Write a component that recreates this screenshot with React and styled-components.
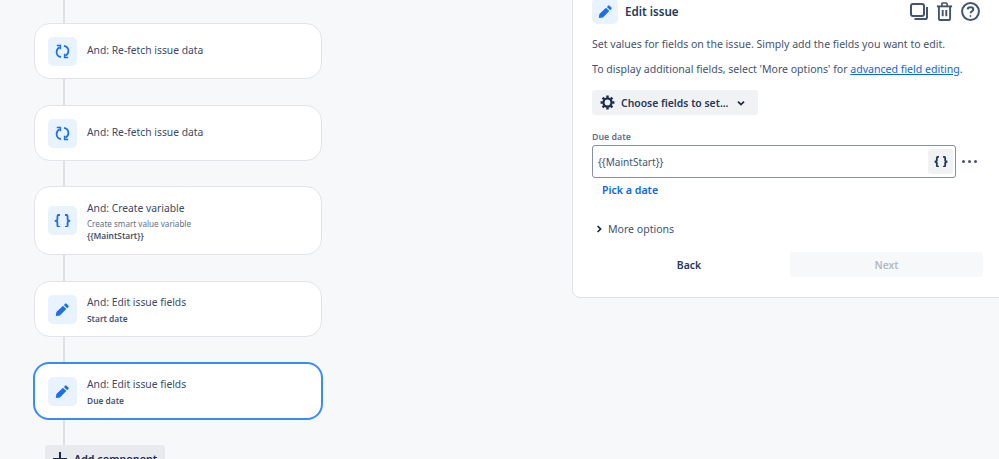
import React from "react";
import styled, { createGlobalStyle } from "styled-components";

const FONT = `"Noto Sans", "Open Sans", "Liberation Sans", sans-serif`;

const Global = createGlobalStyle`
  html, body { margin: 0; padding: 0; height: 459px; overflow: hidden; background: #f7f8f9; }
  body { font-family: ${FONT}; color: #172b4d; }
  #root { height: 459px; overflow: hidden; }
`;

const Page = styled.div`
  display: flex;
  align-items: flex-start;
  height: 459px;
  overflow: hidden;
  background: #f7f8f9;
`;

const Flow = styled.div`
  flex: 0 0 572px;
  display: flex;
  flex-direction: column;
  align-items: flex-start;
  padding-left: 34px;
  box-sizing: border-box;
`;

const Connector = styled.div`
  width: 2px;
  height: ${(p) => p.$h}px;
  margin-left: 29px;
  background: #dfe1e6;
`;

const Card = styled.div`
  box-sizing: border-box;
  width: ${(p) => (p.$selected ? 290 : 288)}px;
  height: ${(p) => p.$h}px;
  margin-left: ${(p) => (p.$selected ? -1 : 0)}px;
  display: flex;
  align-items: center;
  gap: 10px;
  padding-left: 13px;
  background: #fff;
  border: ${(p) => (p.$selected ? "2px solid #388bff" : "1px solid #e2e4e9")};
  border-radius: 16px;
`;

const Tile = styled.div`
  flex: none;
  width: ${(p) => p.$size}px;
  height: ${(p) => p.$size}px;
  display: flex;
  align-items: center;
  justify-content: center;
  border-radius: 5px;
  background: #e9f2ff;
  color: #1d6fe8;
`;

const CardText = styled.div`
  display: flex;
  flex-direction: column;
  min-width: 0;
  margin-top: ${(p) => (p.$single ? -2 : 2)}px;
`;

const CardTitle = styled.div`
  font-size: 10.3px;
  line-height: 14px;
  color: #3b4a66;
`;

const CardSub = styled.div`
  font-size: 8.1px;
  line-height: 12px;
  margin-top: 3px;
  color: #626f86;
`;

const CardStrong = styled.div`
  font-size: 8.4px;
  line-height: 12px;
  margin-top: ${(p) => (p.$gap ? 4 : 0)}px;
  font-weight: 600;
  color: #44546f;
`;

const AddButton = styled.button`
  margin-left: 11px;
  width: 120px;
  height: 28px;
  flex: none;
  border: 0;
  padding: 0 0 0 8px;
  display: flex;
  align-items: center;
  gap: 7px;
  border-radius: 3px;
  background: #e9eaee;
  color: #172b4d;
  font: 600 10.7px ${FONT};
`;

const Panel = styled.section`
  box-sizing: border-box;
  flex: 0 0 448px;
  margin-top: -13px;
  height: 311px;
  padding: 10px 37px 0 19px;
  display: flex;
  flex-direction: column;
  align-items: stretch;
  background: #fff;
  border: 1px solid #dfe1e6;
  border-radius: 0 0 0 8px;
`;

const Header = styled.header`
  display: flex;
  align-items: center;
  height: 26px;
  gap: 7px;
`;

const Heading = styled.h2`
  margin: 0;
  font-size: 11.6px;
  font-weight: 600;
  color: #253858;
  flex: 1;
`;

const HeaderIcons = styled.div`
  display: flex;
  align-items: center;
  gap: 8px;
  margin-right: 3px;
  margin-top: 1px;
  color: #44546f;
`;

const Para = styled.p`
  margin: ${(p) => p.$top}px 0 0;
  font-size: 10.55px;
  line-height: 14px;
  color: #44546f;
  white-space: nowrap;
`;

const Link = styled.a`
  color: #0c66e4;
  text-decoration: underline;
`;

const ChooseButton = styled.button`
  align-self: flex-start;
  box-sizing: border-box;
  margin-top: 14px;
  width: 166px;
  height: 25px;
  border: 0;
  border-radius: 3px;
  padding: 0 0 0 8px;
  display: flex;
  align-items: center;
  gap: 6px;
  background: #f1f2f4;
  color: #253858;
  font: 600 10.4px ${FONT};
  svg:last-child {
    margin-left: 3px;
  }
`;

const Label = styled.div`
  margin-top: 16px;
  font-size: 8.8px;
  line-height: 12px;
  font-weight: 600;
  color: #626f86;
`;

const FieldRow = styled.div`
  display: flex;
  align-items: center;
  margin-top: 2px;
  gap: 6px;
`;

const Input = styled.div`
  box-sizing: border-box;
  width: 364px;
  height: 33px;
  display: flex;
  align-items: center;
  justify-content: space-between;
  padding: 0 2px 0 5px;
  border: 1px solid #8590a2;
  border-radius: 3px;
  font-size: 10.1px;
  color: #44546f;
`;

const BraceButton = styled.div`
  width: 25px;
  height: 25px;
  display: flex;
  align-items: center;
  justify-content: center;
  border-radius: 3px;
  background: #f1f2f4;
  color: #253858;
`;

const Dots = styled.div`
  display: flex;
  gap: 3px;
  span {
    width: 3px;
    height: 3px;
    border-radius: 50%;
    background: #44546f;
  }
`;

const PickDate = styled.a`
  margin: 5px 0 0 10px;
  font-size: 10.6px;
  line-height: 14px;
  font-weight: 600;
  color: #0c66e4;
`;

const More = styled.div`
  margin-top: 25px;
  padding-left: 3px;
  display: flex;
  align-items: center;
  gap: 5px;
  font-size: 10.55px;
  line-height: 14px;
  color: #44546f;
`;

const Footer = styled.div`
  margin-top: 16px;
  display: grid;
  grid-template-columns: 194px 193px;
  gap: 4px;
`;

const FooterButton = styled.button`
  height: 25px;
  border: 0;
  border-radius: 3px;
  background: ${(p) => (p.disabled ? "#f7f8f9" : "#fff")};
  color: ${(p) => (p.disabled ? "#b3b9c4" : "#253858")};
  font: 600 10.4px ${FONT};
`;

const Refresh = () => (
  <svg width="15" height="15" viewBox="0 0 15 15" fill="none" stroke="currentColor" strokeWidth="1.7">
    <path d="M6 13.2 C3 12.6 1.6 10.4 1.6 8 C1.6 5.9 2.6 4.2 4.6 3.2" />
    <path d="M9 1.8 C12 2.4 13.4 4.6 13.4 7 C13.4 9.1 12.4 10.8 10.4 11.8" />
    <path d="M1.8 1.6 H5.4 V5.2" strokeWidth="1.5" />
    <path d="M13.2 13.4 H9.6 V9.8" strokeWidth="1.5" />
  </svg>
);

const Pencil = ({ size = 15 }) => (
  <svg width={size} height={size} viewBox="0 0 15 15" fill="currentColor">
    <path d="M10.1 1.7 a1 1 0 0 1 1.4 0 l1.9 1.9 a1 1 0 0 1 0 1.4 l-1.2 1.2 -3.3-3.3z" />
    <path d="M8 3.8 l3.3 3.3 -6.4 6.3 -3.7 .5 c-.3 0 -.4-.2 -.4-.4 l.6-3.6z" />
  </svg>
);

const Braces = ({ color = "#1d6fe8", w = 17, sw = 1.8 }) => (
  <svg width={w} height={w * 0.82} viewBox="0 0 17 14" fill="none" stroke={color} strokeWidth={sw}>
    <path d="M6 1 H4.6 Q3.4 1 3.4 2.4 V5.3 Q3.4 6.8 0.8 7 Q3.4 7.2 3.4 8.7 V11.6 Q3.4 13 4.6 13 H6" />
    <path d="M11 1 H12.4 Q13.6 1 13.6 2.4 V5.3 Q13.6 6.8 16.2 7 Q13.6 7.2 13.6 8.7 V11.6 Q13.6 13 12.4 13 H11" />
  </svg>
);

const Copy = () => (
  <svg width="18" height="17" viewBox="0 0 18 17" fill="none" stroke="currentColor" strokeWidth="2">
    <rect x="1" y="1" width="13" height="12" rx="2" />
    <path d="M17 4 V14.2 Q17 16 15.2 16 H4.5" />
  </svg>
);

const Trash = () => (
  <svg width="17" height="19" viewBox="0 0 17 20" fill="none" stroke="currentColor" strokeWidth="2">
    <path d="M0.5 4.6 H16.5" />
    <path d="M5.8 4.5 V2 Q5.8 1 6.8 1 H10.2 Q11.2 1 11.2 2 V4.5" strokeWidth="1.7" />
    <path d="M2.6 4.6 V17 Q2.6 19 4.6 19 H12.4 Q14.4 19 14.4 17 V4.6" />
    <path d="M6.6 8.5 V15 M10.4 8.5 V15" />
  </svg>
);

const Help = () => (
  <svg width="19" height="19" viewBox="0 0 19 19" fill="none" stroke="currentColor" strokeWidth="2">
    <circle cx="9.5" cy="9.5" r="8.4" />
    <path d="M6.7 7.4 C6.8 4.4 12.3 4.4 12.3 7.4 C12.3 9.3 9.5 9.2 9.5 11.3" />
    <circle cx="9.5" cy="14" r="0.6" fill="currentColor" strokeWidth="1" />
  </svg>
);

const Gear = () => (
  <svg width="15" height="15" viewBox="0 0 16 16" fill="none" stroke="#172b4d">
    <circle cx="8" cy="8" r="4.3" strokeWidth="2.4" />
    <path
      strokeWidth="2.6"
      d="M8 .6 V3 M8 13 V15.4 M.6 8 H3 M13 8 H15.4 M2.8 2.8 L4.4 4.4 M11.6 11.6 L13.2 13.2 M2.8 13.2 L4.4 11.6 M11.6 4.4 L13.2 2.8"
    />
  </svg>
);

const ChevronIcon = styled.svg`
  flex: none;
  transform: ${(p) => (p.$right ? "rotate(-90deg)" : "none")};
`;

const Chevron = ({ right }) => (
  <ChevronIcon $right={right} width="8" height="8" viewBox="0 0 8 8" fill="none" stroke="#172b4d" strokeWidth="1.7">
    <path d="M1 2.6 L4 5.6 L7 2.6" />
  </ChevronIcon>
);

const Plus = () => (
  <svg width="14" height="14" viewBox="0 0 15 15" fill="none" stroke="#172b4d" strokeWidth="2.2">
    <path d="M7.5 0 V15 M0 7.5 H15" />
  </svg>
);

const Step = ({ icon, title, sub, strong, h, selected }) => (
  <Card $h={h} $selected={selected}>
    <Tile $size={29}>{icon}</Tile>
    <CardText $single={!sub && !strong}>
      <CardTitle>{title}</CardTitle>
      {sub && <CardSub>{sub}</CardSub>}
      {strong && <CardStrong $gap={!sub}>{strong}</CardStrong>}
    </CardText>
  </Card>
);

export default function App() {
  return (
    <Page>
      <Global />
      <Flow>
        <Connector $h={23} />
        <Step h={56} icon={<Refresh />} title="And: Re-fetch issue data" />
        <Connector $h={26} />
        <Step h={56} icon={<Refresh />} title="And: Re-fetch issue data" />
        <Connector $h={25} />
        <Step
          h={69}
          icon={<Braces />}
          title="And: Create variable"
          sub="Create smart value variable"
          strong="{{MaintStart}}"
        />
        <Connector $h={26} />
        <Step h={56} icon={<Pencil />} title="And: Edit issue fields" strong="Start date" />
        <Connector $h={25} />
        <Step selected h={58} icon={<Pencil />} title="And: Edit issue fields" strong="Due date" />
        <Connector $h={25} />
        <AddButton>
          <Plus />
          Add component
        </AddButton>
      </Flow>
      <Panel>
        <Header>
          <Tile $size={26}>
            <Pencil />
          </Tile>
          <Heading>Edit issue</Heading>
          <HeaderIcons>
            <Copy />
            <Trash />
            <Help />
          </HeaderIcons>
        </Header>
        <Para $top={13}>Set values for fields on the issue. Simply add the fields you want to edit.</Para>
        <Para $top={11}>
          To display additional fields, select 'More options' for <Link>advanced field editing</Link>.
        </Para>
        <ChooseButton>
          <Gear />
          Choose fields to set...
          <Chevron />
        </ChooseButton>
        <Label>Due date</Label>
        <FieldRow>
          <Input>
            {"{{MaintStart}}"}
            <BraceButton>
              <Braces color="#253858" w={14} sw={2.2} />
            </BraceButton>
          </Input>
          <Dots>
            <span />
            <span />
            <span />
          </Dots>
        </FieldRow>
        <PickDate>Pick a date</PickDate>
        <More>
          <Chevron right />
          More options
        </More>
        <Footer>
          <FooterButton>Back</FooterButton>
          <FooterButton disabled>Next</FooterButton>
        </Footer>
      </Panel>
    </Page>
  );
}
